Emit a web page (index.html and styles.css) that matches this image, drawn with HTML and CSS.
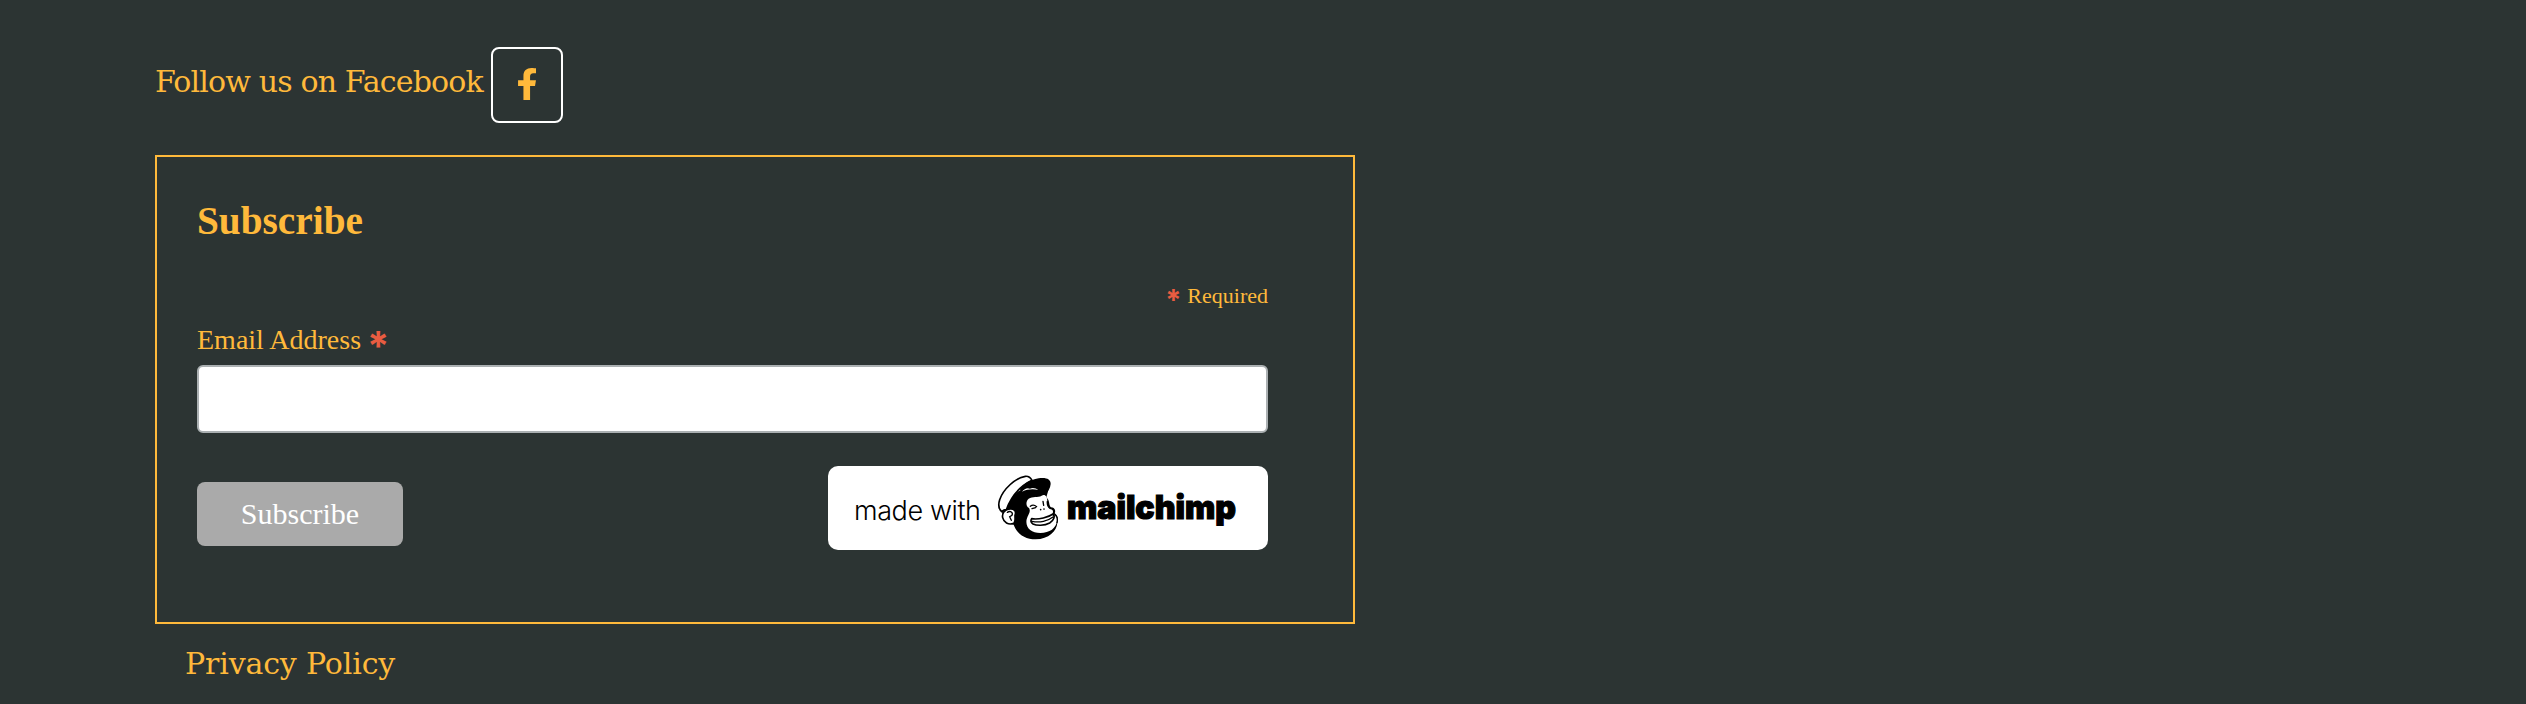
FILE: index.html
```html
<!DOCTYPE html>
<html lang="en">
<head>
<meta charset="utf-8">
<title>Subscribe</title>
<link rel="stylesheet" href="styles.css">
</head>
<body>
<footer class="footer">
  <div class="follow">
    <span class="slab follow-text">Follow us on Facebook</span>
    <a class="social" aria-label="Facebook">
      <svg class="social-icon" viewBox="22 0 272 512" preserveAspectRatio="none"><path d="M279.14 288l14.22-92.66h-88.91v-60.13c0-25.35 12.42-50.06 52.24-50.06h40.42V6.26S260.430 0 225.360 0c-73.220 0-121.080 44.380-121.080 124.720v70.620H22.890V288h81.390v224h100.170V288z"/></svg>
    </a>
  </div>
  <form class="signup">
    <h2 class="title">Subscribe</h2>
    <div class="required"><span class="star">*</span><span>Required</span></div>
    <label class="label" for="email"><span>Email Address</span><span class="star star-large">*</span></label>
    <input class="field" id="email" type="email">
    <div class="actions">
      <button class="submit" type="button">Subscribe</button>
      <svg class="badge" viewBox="0 0 440 84">
        <text class="made" x="26" y="53.500" textLength="127">made with</text>
        <g transform="translate(152 -6) scale(.33333)">
          <path d="M77 149C82 132 96 104 121 91C145 76 181 80 205 91L199 112C211 123 205 136 213 142C224 143 228 151 224 160C234 168 236 178 232 188C231 213 206 237 167 238C135 238 111 222 101 194C78 193 62 174 68 157Z"/>
          <path class="white line" d="M67 156C57 149 54 135 59 119C70 87 107 53 136 49C145 48 151 52 156 61C123 77 95 105 79 149C73 149 68 152 67 156Z"/>
          <path d="M119 91C126 75 148 60 176 55C197 51 213 57 212 72C211 85 204 96 197 101C177 91 149 86 119 91Z"/>
          <path class="white" d="M126 95C133 86 142 82 150 86C157 82 168 84 175 90C158 86 142 88 126 95Z"/>
          <path class="white" d="M146 116C158 108 173 114 185 107C195 101 202 110 202 124C201 134 204 141 210 145C219 146 223 152 220 160C230 165 234 174 231 183C229 204 209 219 181 219C153 219 135 202 140 178C144 162 154 156 147 144C137 139 137 123 146 116Z"/>
          <path class="white line" d="M105 166C110 153 102 146 90 147C75 149 65 158 68 173C71 187 85 196 101 190C107 187 105 181 105 166Z"/>
          <path class="stroke" d="M82 157C91 151 100 157 96 166L89 170L94 181"/>
          <path class="stroke" d="M202 124C201 134 204 141 210 145C219 146 223 152 220 160C230 165 234 174 231 188"/>
          <path class="white line" d="M155 176C175 180 207 171 219 162C226 168 222 181 209 189C193 198 169 197 159 192C153 188 152 181 155 176Z"/>
          <path class="stroke" d="M157 184C178 189 204 183 219 171"/>
          <path class="stroke" d="M151 139C157 134 164 135 170 140M156 146L167 143M189 124L191 136"/>
          <circle cx="182" cy="149" r="2.500"/><circle cx="192" cy="147" r="2.500"/>
        </g>
        <text class="chimp" x="239" y="53" textLength="169" lengthAdjust="spacingAndGlyphs">mailchimp</text>
      </svg>
    </div>
  </form>
  <a class="slab privacy">Privacy Policy</a>
</footer>
</body>
</html>
```
FILE: styles.css
```css
* { box-sizing: border-box; }
body {
  margin: 0;
  background: #2c3433;
  color: #ffb93b;
  font-family: "Liberation Serif", serif;
}
.footer {
  height: 704px;
  padding: 47px 0 0 155px;
  overflow: hidden;
}
.slab {
  font-family: "DejaVu Serif", serif;
  font-size: 30px;
  line-height: 40px;
  white-space: nowrap;
}
.follow { display: flex; height: 76px; margin-bottom: 32px; }
.follow-text { width: 336px; padding-top: 15px; letter-spacing: -.850px; }
.social {
  display: flex;
  align-items: center;
  justify-content: center;
  width: 72px;
  height: 76px;
  border: 2px solid #fff;
  border-radius: 8px;
}
.social-icon { width: 18px; height: 32px; fill: #ffb93b; margin-bottom: 2px; }
.signup {
  width: 1200px;
  height: 469px;
  border: 2px solid #ffb93b;
  padding: 42px 85px 0 40px;
}
.title { margin: 0; font-size: 39.300px; line-height: 44px; }
.required {
  display: flex;
  justify-content: flex-end;
  gap: 6px;
  margin-top: 40px;
  font-size: 22px;
  line-height: 26px;
}
.star {
  color: #e85c41;
  font: 700 29px/34px Inter, sans-serif;
  height: 26px;
}
.star-large { font-size: 40px; line-height: 43px; }
.label {
  display: flex;
  gap: 6px;
  height: 32px;
  margin-top: 15px;
  font-size: 28px;
  line-height: 32px;
}
.field {
  display: block;
  width: 1071px;
  height: 68px;
  margin-top: 9px;
  border: 2px solid #abb0b2;
  border-radius: 6px;
  background: #fff;
}
.actions { display: flex; justify-content: space-between; margin-top: 33px; }
.submit {
  width: 206px;
  height: 64px;
  margin-top: 16px;
  border: 0;
  border-radius: 8px;
  background: #aaa;
  color: #fff;
  font: 30px "Liberation Serif", serif;
}
.badge { width: 440px; height: 84px; background: #fff; border-radius: 10px; }
.made { font: 350 27px Inter, sans-serif; }
.chimp { font: 900 33px Inter, sans-serif; stroke: #000; stroke-width: 1.200px; }
.white { fill: #fff; }
.line { stroke: #000; stroke-width: 5px; stroke-linejoin: round; }
.stroke { fill: none; stroke: #000; stroke-width: 4px; stroke-linecap: round; }
.privacy { display: block; margin: 20px 0 0 30px; letter-spacing: -.150px; }
```
